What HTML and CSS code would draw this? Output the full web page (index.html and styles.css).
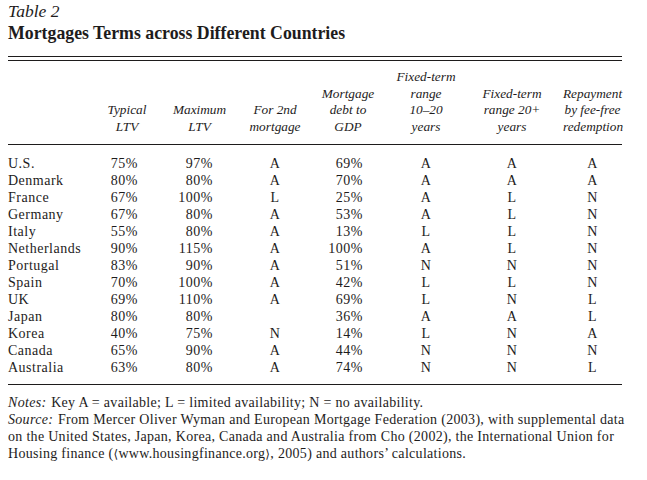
FILE: index.html
```html
<!DOCTYPE html>
<html>
<head>
<meta charset="utf-8">
<link rel="stylesheet" href="styles.css">
</head>
<body>
<div class="page">
  <div class="caption">
    <div class="label">Table 2</div>
    <div class="title">Mortgages Terms across Different Countries</div>
  </div>
  <div class="double-rule"></div>
  <table class="data">
    <colgroup>
      <col class="c1"><col class="c2"><col class="c3"><col class="c4"><col class="c5"><col class="c6"><col class="c7"><col class="c8">
    </colgroup>
    <thead>
      <tr>
        <th></th>
        <th>Typical<br>LTV</th>
        <th>Maximum<br>LTV</th>
        <th>For 2nd<br>mortgage</th>
        <th>Mortgage<br>debt to<br>GDP</th>
        <th>Fixed-term<br>range<br>10–20<br>years</th>
        <th>Fixed-term<br>range 20+<br>years</th>
        <th>Repayment<br>by fee-free<br>redemption</th>
      </tr>
    </thead>
    <tbody>
      <tr><td class="name">U.S.</td><td class="typ">75%</td><td class="max">97%</td><td class="ch">A</td><td class="debt">69%</td><td class="ch">A</td><td class="ch">A</td><td class="ch">A</td></tr>
      <tr><td class="name">Denmark</td><td class="typ">80%</td><td class="max">80%</td><td class="ch">A</td><td class="debt">70%</td><td class="ch">A</td><td class="ch">A</td><td class="ch">A</td></tr>
      <tr><td class="name">France</td><td class="typ">67%</td><td class="max">100%</td><td class="ch">L</td><td class="debt">25%</td><td class="ch">A</td><td class="ch">L</td><td class="ch">N</td></tr>
      <tr><td class="name">Germany</td><td class="typ">67%</td><td class="max">80%</td><td class="ch">A</td><td class="debt">53%</td><td class="ch">A</td><td class="ch">L</td><td class="ch">N</td></tr>
      <tr><td class="name">Italy</td><td class="typ">55%</td><td class="max">80%</td><td class="ch">A</td><td class="debt">13%</td><td class="ch">L</td><td class="ch">L</td><td class="ch">N</td></tr>
      <tr><td class="name">Netherlands</td><td class="typ">90%</td><td class="max">115%</td><td class="ch">A</td><td class="debt">100%</td><td class="ch">A</td><td class="ch">L</td><td class="ch">N</td></tr>
      <tr><td class="name">Portugal</td><td class="typ">83%</td><td class="max">90%</td><td class="ch">A</td><td class="debt">51%</td><td class="ch">N</td><td class="ch">N</td><td class="ch">N</td></tr>
      <tr><td class="name">Spain</td><td class="typ">70%</td><td class="max">100%</td><td class="ch">A</td><td class="debt">42%</td><td class="ch">L</td><td class="ch">L</td><td class="ch">N</td></tr>
      <tr><td class="name">UK</td><td class="typ">69%</td><td class="max">110%</td><td class="ch">A</td><td class="debt">69%</td><td class="ch">L</td><td class="ch">N</td><td class="ch">L</td></tr>
      <tr><td class="name">Japan</td><td class="typ">80%</td><td class="max">80%</td><td class="ch"></td><td class="debt">36%</td><td class="ch">A</td><td class="ch">A</td><td class="ch">L</td></tr>
      <tr><td class="name">Korea</td><td class="typ">40%</td><td class="max">75%</td><td class="ch">N</td><td class="debt">14%</td><td class="ch">L</td><td class="ch">N</td><td class="ch">A</td></tr>
      <tr><td class="name">Canada</td><td class="typ">65%</td><td class="max">90%</td><td class="ch">A</td><td class="debt">44%</td><td class="ch">N</td><td class="ch">N</td><td class="ch">N</td></tr>
      <tr><td class="name">Australia</td><td class="typ">63%</td><td class="max">80%</td><td class="ch">A</td><td class="debt">74%</td><td class="ch">N</td><td class="ch">N</td><td class="ch">L</td></tr>
    </tbody>
  </table>
  <div class="notes">
    <p><em>Notes:</em> Key A = available; L = limited availability; N = no availability.</p>
    <p><em>Source:</em> From Mercer Oliver Wyman and European Mortgage Federation (2003), with supplemental data<br>on the United States, Japan, Korea, Canada and Australia from Cho (2002), the International Union for<br>Housing finance (<span class="br">⟨</span>www.housingfinance.org<span class="br">⟩</span>, 2005) and authors’ calculations.</p>
  </div>
</div>
</body>
</html>
```

FILE: styles.css
```css
html, body {
  margin: 0;
  padding: 0;
  background: #ffffff;
}

.page {
  width: 614px;
  padding-left: 8px;
  color: #1e1c1c;
  font-family: "Liberation Serif", "Times New Roman", serif;
}

.caption {
  line-height: 22px;
  height: 44px;
  margin-bottom: 12px;
}

.label {
  font-style: italic;
  font-size: 17.5px;
}

.title {
  font-weight: bold;
  font-size: 17.8px;
}

.double-rule {
  height: 3px;
  border-top: 1px solid #1e1c1c;
  border-bottom: 1px solid #1e1c1c;
}

.data {
  width: 614px;
  table-layout: fixed;
  border-collapse: collapse;
  border-spacing: 0;
}

.c1 { width: 92px; }
.c2 { width: 54px; }
.c3 { width: 91px; }
.c4 { width: 60px; }
.c5 { width: 86px; }
.c6 { width: 70px; }
.c7 { width: 102px; }
.c8 { width: 59px; }

.data th {
  font-style: italic;
  font-weight: normal;
  font-size: 13.3px;
  line-height: 16.7px;
  text-align: center;
  vertical-align: bottom;
  white-space: nowrap;
  padding: 8px 0 8px 0;
  border-bottom: 1px solid #1e1c1c;
}

.data td {
  font-size: 14px;
  letter-spacing: 0.5px;
  line-height: 17px;
  padding: 0;
  white-space: nowrap;
}

.data tbody tr:first-child td {
  padding-top: 10px;
}

.data tbody tr:last-child td {
  padding-bottom: 8px;
  border-bottom: 1px solid #1e1c1c;
}

.data td.name {
  text-align: left;
}

.data td.typ {
  text-align: right;
  padding-right: 16px;
}

.data td.max {
  text-align: right;
  padding-right: 32px;
}

.data td.debt {
  text-align: right;
  padding-right: 28px;
}

.data td.ch {
  text-align: center;
}

.notes {
  margin-top: 9px;
  font-size: 14px;
  letter-spacing: 0.3px;
  line-height: 17px;
  white-space: nowrap;
}

.notes p {
  margin: 0;
}

.notes em {
  font-style: italic;
  padding-right: 1px;
}

.notes .br {
  font-family: "DejaVu Sans", sans-serif;
  font-size: 12px;
}
```
